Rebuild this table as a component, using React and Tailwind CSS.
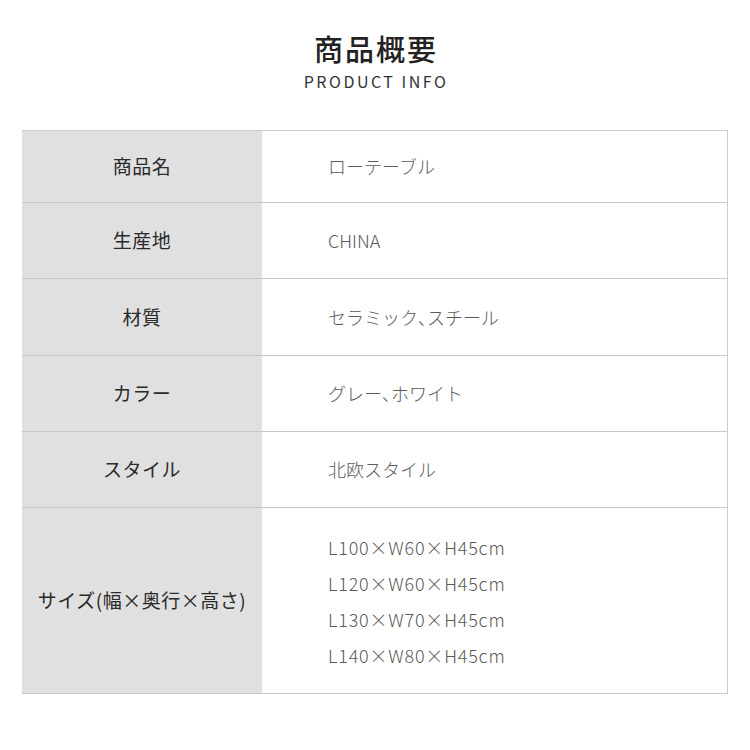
const FONT = { fontFamily: '"Noto Sans CJK JP", "Noto Sans", sans-serif' };

// narrow ideographic comma, like the proportional one in the reference
const Comma = () => <span className="[font-feature-settings:'palt']">、</span>;

const rows = [
  { label: "商品名", value: ["ローテーブル"], h: "h-[72px]" },
  { label: "生産地", value: ["CHINA"], h: "h-[76px]" },
  { label: "材質", value: [<>セラミック<Comma />スチール</>], h: "h-[77px]" },
  { label: "カラー", value: [<>グレー<Comma />ホワイト</>], h: "h-[76px]" },
  { label: "スタイル", value: ["北欧スタイル"], h: "h-[76px]" },
  {
    label: "サイズ(幅×奥行×高さ)",
    value: [
      "L100×W60×H45cm",
      "L120×W60×H45cm",
      "L130×W70×H45cm",
      "L140×W80×H45cm",
    ],
    h: "h-[186px]",
  },
];

export default function App() {
  return (
    <div className="w-[750px] h-[750px] bg-white" style={FONT}>
      <div className="flex flex-col items-center pt-[29px]">
        <h1 className="text-[29px] leading-[38px] font-medium text-[#222] tracking-[2px] pl-[2px]">商品概要</h1>
        <p className="mt-[3px] text-[16px] leading-[22px] text-[#333] tracking-[2.5px] pl-[2px]">PRODUCT INFO</p>
      </div>

      <div className="mx-[22px] mt-[38px] w-[706px] border-t border-r border-[#cccccc]">
        {rows.map((r) => (
          <div key={r.label} className={`flex ${r.h} border-b border-[#c8c8c8]`}>
            <div className="w-[240px] bg-[#e0e0e0] flex items-center justify-center text-[19px] tracking-[0.5px] text-[#2a2a2a]">
              {r.label}
            </div>
            <div
              className={`flex-1 flex flex-col justify-center pl-[66px] text-[18px] font-light text-[#5a5a5a] ${
                r.value.length > 1 ? "tracking-[0.8px]" : ""
              }`}
            >
              {r.value.map((v, i) => (
                <div key={i} className={r.value.length > 1 ? "leading-[36px]" : ""}>
                  {v}
                </div>
              ))}
            </div>
          </div>
        ))}
      </div>
    </div>
  );
}
